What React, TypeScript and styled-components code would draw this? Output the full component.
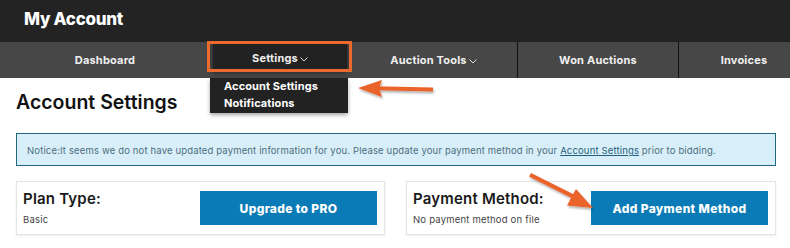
import React from "react";
import styled, { createGlobalStyle } from "styled-components";

const Global = createGlobalStyle`
  html, body { margin: 0; padding: 0; background: #fff; overflow: hidden; }
  body { font-family: "Inter", "Noto Sans", sans-serif; width: 790px; height: 248px; }
`;

const Page = styled.div`
  position: relative;
  width: 790px;
  height: 248px;
  overflow: hidden;
`;

const Header = styled.header`
  height: 42px;
  background: #232323;
  display: flex;
  align-items: center;
  padding-left: 24px;
  box-sizing: border-box;
`;

const Title = styled.h1`
  margin: 0;
  color: #fff;
  font-size: 17px;
  font-weight: 800;
  letter-spacing: -0.3px;
  line-height: 1;
  padding-bottom: 3px;
`;

const Nav = styled.nav`
  height: 36px;
  background: #474747;
  display: flex;
  width: 810px;
`;

const NavItem = styled.div<{ $w: number; $sep?: boolean }>`
  position: relative;
  flex: 0 0 ${(p) => p.$w}px;
  box-sizing: border-box;
  border-left: ${(p) => (p.$sep ? "1px solid #111" : "none")};
  display: flex;
  align-items: center;
  justify-content: center;
  color: #f0f0f0;
  font-size: 11px;
  font-weight: 700;
  letter-spacing: 0.2px;
`;

const ActiveCell = styled.div`
  position: absolute;
  left: 3px;
  right: 3px;
  top: 0;
  height: 28px;
  background: #222;
  box-shadow: 0 2px 5px rgba(0, 0, 0, 0.6);
  display: flex;
  align-items: center;
  justify-content: center;
  padding-top: 4px;
  box-sizing: border-box;
`;

const Label = styled.span`
  display: inline-flex;
  align-items: center;
  gap: 2px;
`;

const Chevron = () => (
  <svg width="8" height="5" viewBox="0 0 8 5" style={{ marginTop: 2 }}>
    <path d="M0.5 0.5 L4 4 L7.5 0.5" fill="none" stroke="#eee" strokeWidth="0.9" />
  </svg>
);

const Dropdown = styled.div`
  position: absolute;
  left: 0;
  top: 36px;
  width: 138px;
  height: 35px;
  background: #222;
  box-shadow: 0 2px 4px rgba(0, 0, 0, 0.35);
  box-sizing: border-box;
  padding: 0 0 0 14px;
  display: flex;
  flex-direction: column;
  z-index: 3;
`;

const DropItem = styled.div`
  color: #fff;
  font-size: 11px;
  font-weight: 700;
  letter-spacing: 0.1px;
  line-height: 17px;
  height: 17px;
`;

const Main = styled.main`
  padding: 0 14px 0 16px;
`;

const Heading = styled.h2`
  margin: 13px 0 0 0;
  font-size: 19.5px;
  font-weight: 600;
  color: #111;
  letter-spacing: 0px;
  line-height: 22px;
`;

const Notice = styled.div`
  margin-top: 20px;
  height: 33px;
  box-sizing: border-box;
  background: #d8eef8;
  border: 1px solid #21667f;
  color: #4c6f80;
  font-size: 9.5px;
  display: flex;
  align-items: center;
  padding-left: 10px;
  padding-top: 2px;
  white-space: nowrap;
  letter-spacing: 0.15px;
`;

const NoticeLink = styled.a`
  color: #1f5f7d;
  text-decoration: underline;
`;

const Cards = styled.div`
  margin-top: 15px;
  display: grid;
  grid-template-columns: 369px 370px;
  gap: 21px;
`;

const Card = styled.div`
  height: 54px;
  box-sizing: border-box;
  border: 1px solid #e4e4e4;
  box-shadow: 0 1px 2px rgba(0, 0, 0, 0.08);
  display: flex;
  align-items: center;
  justify-content: space-between;
  padding: 0 7px 0 6px;
`;

const CardText = styled.div`
  display: flex;
  flex-direction: column;
  gap: 7px;
  padding-bottom: 1px;
`;

const CardTitle = styled.div`
  font-size: 15px;
  font-weight: 600;
  color: #1a1a1a;
  letter-spacing: 0.2px;
  line-height: 16px;
`;

const CardSub = styled.div`
  font-size: 9.5px;
  color: #444;
  line-height: 11px;
  letter-spacing: 0.2px;
`;

const Button = styled.button`
  width: 177px;
  height: 34px;
  border: none;
  background: #0a7bb6;
  color: #fff;
  font-family: inherit;
  font-size: 12px;
  font-weight: 800;
  letter-spacing: 0.35px;
  padding: 0;
`;

const Annotation = styled.div`
  position: absolute;
  left: 207px;
  top: 41px;
  width: 145px;
  height: 31px;
  box-sizing: border-box;
  border: 3px solid #ec6a2e;
  pointer-events: none;
  z-index: 5;
`;

const ArrowLayer = styled.svg`
  position: absolute;
  left: 0;
  top: 0;
  pointer-events: none;
  z-index: 6;
`;

const Arrows = () => (
  <ArrowLayer width="790" height="248" viewBox="0 0 790 248">
    <defs>
      <filter id="sh" x="-20%" y="-20%" width="140%" height="160%">
        <feDropShadow dx="1" dy="2" stdDeviation="1.2" floodColor="#000" floodOpacity="0.3" />
      </filter>
    </defs>
    <g filter="url(#sh)" fill="#ea6429" stroke="none">
      <polygon points="376,86.2 433,87.5 433,91.5 376,90.2" />
      <polygon points="358,88 382,80 379,88.2 382,97" />
      <polygon points="531,173 574,194.6 572,198.2 529,176.6" />
      <polygon points="593,208 567,205.5 571.5,197 576,189" />
    </g>
  </ArrowLayer>
);

export default function App() {
  return (
    <Page>
      <Global />
      <Header>
        <Title>My Account</Title>
      </Header>
      <Nav>
        <NavItem $w={210}>Dashboard</NavItem>
        <NavItem $w={140}>
          <ActiveCell>
            <Label>
              Settings
              <Chevron />
            </Label>
          </ActiveCell>
          <Dropdown>
            <DropItem>Account Settings</DropItem>
            <DropItem>Notifications</DropItem>
          </Dropdown>
        </NavItem>
        <NavItem $w={167}>
          <Label>
            Auction Tools
            <Chevron />
          </Label>
        </NavItem>
        <NavItem $w={161} $sep>
          Won Auctions
        </NavItem>
        <NavItem $w={131} $sep>
          Invoices
        </NavItem>
      </Nav>
      <Main>
        <Heading>Account Settings</Heading>
        <Notice>
          Notice:It seems we do not have updated payment information for you. Please update your payment method in your&nbsp;
          <NoticeLink>Account Settings</NoticeLink>&nbsp;prior to bidding.
        </Notice>
        <Cards>
          <Card>
            <CardText>
              <CardTitle>Plan Type:</CardTitle>
              <CardSub>Basic</CardSub>
            </CardText>
            <Button>Upgrade to PRO</Button>
          </Card>
          <Card>
            <CardText>
              <CardTitle>Payment Method:</CardTitle>
              <CardSub>No payment method on file</CardSub>
            </CardText>
            <Button>Add Payment Method</Button>
          </Card>
        </Cards>
      </Main>
      <Annotation />
      <Arrows />
    </Page>
  );
}
